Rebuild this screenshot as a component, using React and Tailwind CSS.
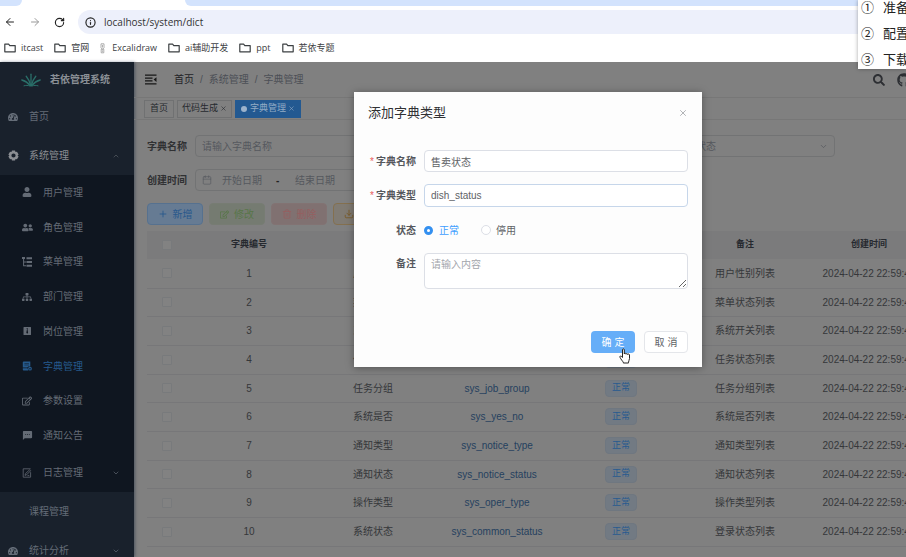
import React from "react";
import { ArrowLeft, ArrowRight, RotateCw, Info, X, ChevronDown, ChevronUp, Plus, Trash2, Download, Calendar } from "lucide-react";
import { FaTachometerAlt, FaUser, FaUserFriends, FaSitemap, FaRegEdit, FaSearch, FaGithub } from "react-icons/fa";
import { MdSms } from "react-icons/md";

const UI = "font-['Liberation_Sans','Noto_Sans_CJK_SC',sans-serif]";

function FolderIcon() {
  return (
    <svg viewBox="0 0 12 10" className="h-[10px] w-3" fill="none" stroke="#3c4043" strokeWidth="1.2">
      <path d="M.8 1.2h3.8l1.2 1.4h5.4v6.200H.8z" strokeLinejoin="round" />
    </svg>
  );
}

function ClipIcon() {
  return (
    <svg viewBox="0 0 5 11" className="mr-[2px] h-[11px] w-[5px]" fill="none" stroke="#9a9a9a" strokeWidth="0.8">
      <path d="M1 .8h3v4L2.5 6.4 1 4.8zM1.2 6.2h2.6v3.6H1.2zM2.5 2v2.5M2.5 7.4v1.4" />
    </svg>
  );
}

function LogoIcon() {
  return (
    <svg viewBox="0 0 20 14" className="h-[14px] w-5" fill="none" stroke="#2a6f69" strokeWidth="1.3" strokeLinecap="round">
      <path d="M10 12.500V1.200" />
      <path d="M9.600 12.500C8.800 8.500 7.200 5.500 5.200 3.200" />
      <path d="M10.400 12.500c.8-4 2.400-7 4.400-9.300" />
      <path d="M9.200 12.600C6.800 9.600 4 7.800.8 7" />
      <path d="M10.800 12.600c2.400-3 5.200-4.800 8.400-5.600" />
      <path d="M9 13c-2.200-.8-4-.8-6-.2M11 13c2.200-.8 4-.8 6-.2" strokeWidth="1" />
    </svg>
  );
}

function GearIcon() {
  return (
    <svg viewBox="0 0 12 12" className="size-[11px]" fill="currentColor">
      <path
        fillRule="evenodd"
        d="M4.300.6h3.400l.5 1.600 1.600-.4 1.800 3-1.200 1.200 1.200 1.200-1.800 3-1.600-.4-.5 1.600H4.300l-.5-1.600-1.600.4-1.800-3L1.600 6 .4 4.800l1.800-3 1.600.4zM6 3.700a2.300 2.300 0 1 0 0 4.600 2.300 2.300 0 0 0 0-4.600z"
      />
    </svg>
  );
}

function TreeTableIcon() {
  return (
    <svg viewBox="0 0 10 10" className="size-[10px]" fill="currentColor">
      <path d="M0 0h3v2H2.100v2.500H4v1H2.100v2.700H4v1H1.100V2H0zM4.500.3H10v2H4.500zM4.500 4H10v2H4.500zM4.500 7.700H10v2H4.500z" />
    </svg>
  );
}

function PostIcon() {
  return (
    <svg viewBox="0 0 10 10" className="size-[10px]" fill="currentColor">
      <path fillRule="evenodd" d="M2 1h6.500a.5.5 0 0 1 .5.5v7a.5.5 0 0 1-.5.5H2a.5.5 0 0 1-.5-.5v-7A.5.5 0 0 1 2 1zm2.400 1.200L5 3.200l-.7 3.600.9 1 .9-1-.6-3.600.5-1z" />
    </svg>
  );
}

function DictIcon() {
  return (
    <svg viewBox="0 0 10 10" className="size-[10px]" fill="currentColor">
      <path fillRule="evenodd" d="M1.500.4h6.800v5H6.200L5.400 6.600H.8V1.100zM2.400 2v.6h4.500V2zm0 1.700v.6h4.500v-.6z" />
      <path d="M.8 7.200h4.800l.6 2.200H1.600a.9.9 0 0 1-.8-.9z" />
      <path fillRule="evenodd" d="M8 5.800a1.900 1.900 0 1 1 0 3.800 1.900 1.900 0 0 1 0-3.800zm0 1.200a.7.7 0 1 0 0 1.400A.7.7 0 0 0 8 7z" />
    </svg>
  );
}

function LogIcon() {
  return (
    <svg viewBox="0 0 10 10" className="size-[10px]" fill="none" stroke="currentColor" strokeWidth="0.8">
      <path d="M8.600 4.200v5H1.200V.8h7.400M3 7.400l.5-1.800L7.600 1.800l1 1-4 4zM5.500 7.600h1.800" />
    </svg>
  );
}

function FoldIcon() {
  return (
    <svg viewBox="0 0 12 11" className="h-[11px] w-3" fill="#161616">
      <path d="M0 .5h11.500v1.300H0zM0 3.500h7.500v1.300H0zM0 6.300h7.500v1.300H0zM0 9.300h11.500v1.300H0zM11.500 3.200v4.700L8.600 5.500z" />
    </svg>
  );
}

function HandCursor() {
  return (
    <svg viewBox="0 0 12 16" className="absolute left-[265px] top-[256px] h-4 w-3" fill="#fff" stroke="#222" strokeWidth="1" strokeLinejoin="round">
      <path d="M3.500 9.500V1.800c0-1.300 1.800-1.300 1.800 0V6c0-1 1.700-1 1.700.2 0-.9 1.700-.9 1.700.3 0-.8 1.800-.7 1.800.5v3.500c0 1.500-1 2.300-1 3.800v.7H4.300v-.8C3.500 13 2 11.500 1 9.300.5 8 1.900 7.600 2.500 8.400z" />
    </svg>
  );
}

const bookmarks = [
  ["itcast", true],
  ["官网", true],
  ["Excalidraw", false],
  ["ai辅助开发", true],
  ["ppt", true],
  ["若依专题", true],
];

function BrowserChrome() {
  return (
    <header className="h-[62px] shrink-0 bg-white font-['Open_Sans','Noto_Sans_CJK_SC',sans-serif] text-[#3c4043]">
      <div className="flex h-[6px] bg-white">
        <div className="w-[22px] rounded-br-md bg-[#d3e3fd]" />
        <div className="w-[163px] bg-white" />
        <div className="flex-1 rounded-bl-md bg-[#d3e3fd]" />
      </div>
      <div className="flex h-8 items-center pl-1">
        <nav className="flex w-[74px] items-center gap-[13px]">
          <button aria-label="Back"><ArrowLeft className="size-3 text-[#222]" /></button>
          <button aria-label="Forward"><ArrowRight className="size-3 text-[#999]" /></button>
          <button aria-label="Reload"><RotateCw className="size-[11px] text-[#222]" strokeWidth={2.5} /></button>
        </nav>
        <label className="flex h-6 flex-1 items-center gap-2 rounded-l-full bg-[#edf0fb] pl-[7px]">
          <Info className="size-[11px] text-[#222]" strokeWidth={2.5} />
          <input aria-label="URL" defaultValue="localhost/system/dict" className="flex-1 bg-transparent text-[10px] text-[#333] outline-none" />
        </label>
      </div>
      <nav className="flex h-5 items-center gap-[11px] pl-1 text-[9px]">
        {bookmarks.map(([name, folder]) => (
          <a key={name} href="#" className="flex items-center gap-[5px] whitespace-nowrap">
            {folder ? <FolderIcon /> : <ClipIcon />}
            <span>{name}</span>
          </a>
        ))}
      </nav>
    </header>
  );
}

function TopItem({ icon, label, chevron, open }) {
  return (
    <a href="#" className={"flex h-[39px] items-center pl-2 pr-[14px] " + (open ? "text-[#8b8e93]" : "text-[#656d78]")}>
      <span className="flex w-[21px] items-center">{icon}</span>
      <span className="flex-1">{label}</span>
      {chevron}
    </a>
  );
}

const subItems = [
  ["用户管理", <FaUser className="size-[10px]" />],
  ["角色管理", <FaUserFriends className="size-[11px]" />],
  ["菜单管理", <TreeTableIcon />],
  ["部门管理", <FaSitemap className="size-[10px]" />],
  ["岗位管理", <PostIcon />],
  ["字典管理", <DictIcon />],
  ["参数设置", <FaRegEdit className="size-[10px]" />],
  ["通知公告", <MdSms className="size-[11px]" />],
];

function Sidebar() {
  return (
    <aside className="w-[134px] shrink-0 overflow-hidden bg-[#19212c] text-[10px] shadow-[1px_0_3px_rgba(0,20,50,0.4)]">
      <div className="flex h-[35px] items-center gap-[9px] pl-[21px]">
        <LogoIcon />
        <h1 className="font-bold text-[#8b9096]">若依管理系统</h1>
      </div>
      <TopItem icon={<FaTachometerAlt className="size-[10px]" />} label="首页" />
      <TopItem open icon={<GearIcon />} label="系统管理" chevron={<ChevronUp className="size-2 text-[#5b6068]" />} />
      <div className="bg-[#0f1620] text-[#646b75]">
        <div className="flex h-[278px] flex-col">
          {subItems.map(([label, icon]) => (
            <a key={label} href="#" className={"flex flex-1 items-center pl-[22px] " + (label === "字典管理" ? "text-[#265a8c]" : "")}>
              <span className="flex w-[21px]">{icon}</span>
              <span>{label}</span>
            </a>
          ))}
        </div>
        <a href="#" className="flex h-[39px] items-center pl-[22px] pr-[14px]">
          <span className="flex w-[21px]"><LogIcon /></span>
          <span className="flex-1">日志管理</span>
          <ChevronDown className="size-2" />
        </a>
      </div>
      <TopItem label="课程管理" />
      <TopItem icon={<FaTachometerAlt className="size-[10px]" />} label="统计分析" chevron={<ChevronDown className="size-2" />} />
    </aside>
  );
}

function Navbar() {
  return (
    <div className="flex h-[35px] items-center pl-[11px] text-[10px]">
      <button aria-label="折叠菜单"><FoldIcon /></button>
      <nav className="ml-[17px] flex flex-1 items-center gap-[6px] text-[#4c4f56]">
        <a href="#" className="text-[#1f2226]">首页</a>
        <span>/</span>
        <span>系统管理</span>
        <span>/</span>
        <span>字典管理</span>
      </nav>
      <div className="-mr-[5px] flex items-center gap-3 text-[#2d2f33]">
        <button aria-label="搜索"><FaSearch className="size-3" /></button>
        <a href="#" aria-label="Github"><FaGithub className="size-[14px]" /></a>
      </div>
    </div>
  );
}

function TagsView() {
  return (
    <nav className="flex h-[23px] items-center gap-[3px] border-y border-y-[#777777] pl-[10px] text-[9px] text-[#26292e]">
      <a href="#" className="flex h-[18px] items-center border border-[#707172] px-[5px]">首页</a>
      <a href="#" className="flex h-[18px] items-center gap-[2px] border border-[#707172] px-[4px]">代码生成<X className="size-[7px]" /></a>
      <a href="#" className="flex h-[18px] items-center gap-[2px] bg-[#235991] px-[6px] text-[#92abc5]">
        <span className="mr-px size-[6px] rounded-full bg-[#9cb3cc]" />字典管理<X className="size-[7px]" />
      </a>
    </nav>
  );
}

const field = "h-[22px] w-[166px] rounded-sm border border-[#727374] bg-transparent";

function SearchForm() {
  return (
    <form className="flex flex-col gap-3 whitespace-nowrap text-[10px] text-[#55585e]">
      <div className="flex gap-[23px]">
        <div className="flex items-center">
          <label htmlFor="q-name" className="w-12 font-bold text-[#303133]">字典名称</label>
          <input id="q-name" placeholder="请输入字典名称" className={field + " px-[6px] placeholder:text-[#55585e]"} />
        </div>
        <div className="flex items-center">
          <label htmlFor="q-type" className="w-12 font-bold text-[#303133]">字典类型</label>
          <input id="q-type" placeholder="请输入字典类型" className={field + " px-[6px] placeholder:text-[#55585e]"} />
        </div>
        <div className="flex items-center">
          <label htmlFor="q-status" className="w-12 font-bold text-[#303133]">状态</label>
          <div className="grid items-center">
            <select id="q-status" className={field + " col-start-1 row-start-1 appearance-none px-[6px]"}>
              <option>字典状态</option>
            </select>
            <ChevronDown className="pointer-events-none col-start-1 row-start-1 mr-[7px] size-[9px] justify-self-end" />
          </div>
        </div>
      </div>
      <div className="flex items-center">
        <label htmlFor="q-start" className="w-12 font-bold text-[#303133]">创建时间</label>
        <div className={field + " flex items-center pl-[6px]"}>
          <Calendar className="size-[10px]" strokeWidth={1.5} />
          <input id="q-start" placeholder="开始日期" className="ml-[10px] w-[50px] bg-transparent placeholder:text-[#55585e]" />
          <span className="w-[23px] pl-1 font-bold text-[#222]">-</span>
          <input aria-label="结束日期" placeholder="结束日期" className="w-[50px] bg-transparent placeholder:text-[#55585e]" />
        </div>
      </div>
    </form>
  );
}

const toolBtn = "flex h-[22px] w-14 items-center justify-center gap-[5px] rounded-sm border text-[10px] ";

function Toolbar() {
  return (
    <div className="flex gap-[6px]">
      <button className={toolBtn + "border-[#56718f] bg-[#667b93] text-[#28588c]"}><Plus className="size-[10px]" />新增</button>
      <button className={toolBtn + "border-[#777c73] bg-[#757b71] text-[#587649]"}><FaRegEdit className="size-[9px]" />修改</button>
      <button className={toolBtn + "border-[#827373] bg-[#807171] text-[#955f60]"}><Trash2 className="size-[10px]" />删除</button>
      <button className={toolBtn + "border-[#84704f] bg-[#807b73] text-[#7a5a25]"}><Download className="size-[10px]" />导出</button>
    </div>
  );
}

const rows = [
  ["用户性别", "sys_user_sex", "用户性别列表"],
  ["菜单状态", "sys_show_hide", "菜单状态列表"],
  ["系统开关", "sys_normal_disable", "系统开关列表"],
  ["任务状态", "sys_job_status", "任务状态列表"],
  ["任务分组", "sys_job_group", "任务分组列表"],
  ["系统是否", "sys_yes_no", "系统是否列表"],
  ["通知类型", "sys_notice_type", "通知类型列表"],
  ["通知状态", "sys_notice_status", "通知状态列表"],
  ["操作类型", "sys_oper_type", "操作类型列表"],
  ["系统状态", "sys_common_status", "登录状态列表"],
];

const tick = "mx-auto block size-[10px] appearance-none rounded-[1px] border border-[#787a7c] bg-[#828282]";

function DictTable() {
  return (
    <div className="overflow-hidden">
      <table className="w-[784px] table-fixed text-center text-[10px] text-[#35373a]">
        <thead className="bg-[#7b7b7c] text-[9px] text-[#26292f]">
          <tr className="h-7">
            <th className="w-[40px]"><input type="checkbox" aria-label="全选" className={tick} /></th>
            <th>字典编号</th>
            <th>字典名称</th>
            <th>字典类型</th>
            <th>状态</th>
            <th>备注</th>
            <th>创建时间</th>
          </tr>
        </thead>
        <tbody>
          {rows.map(([name, type, remark], i) => (
            <tr key={type} className={"border-b border-[#777779] " + (i % 3 === 1 ? "h-7" : "h-[29px]")}>
              <td><input type="checkbox" aria-label={name} className={tick} /></td>
              <td>{i + 1}</td>
              <td>{name}</td>
              <td><a href="#" className="text-[#25405f]">{type}</a></td>
              <td><span className="inline-flex h-[17px] items-center rounded-sm border border-[#6f7780] bg-[#727a83] px-[6px] align-middle text-[9px] text-[#285b90]">正常</span></td>
              <td>{remark}</td>
              <td className="whitespace-nowrap">2024-04-22 22:59:41</td>
            </tr>
          ))}
        </tbody>
      </table>
    </div>
  );
}

const dialogField = "flex-1 rounded-sm border bg-white px-[6px] text-[#606266] ";
const dialogLabel = "w-[56px] pr-2 text-right font-bold text-[#55575c] whitespace-nowrap";

function RequiredLabel({ htmlFor, children }) {
  return (
    <label htmlFor={htmlFor} className={dialogLabel}>
      <span className="mr-[2px] font-normal text-[#e85c5c]">*</span>{children}
    </label>
  );
}

function Dialog() {
  return (
    <section role="dialog" aria-label="添加字典类型" className="absolute left-[354px] top-[92px] w-[348px] bg-[#fdfdfd] px-[14px] pb-[14px] text-[10px] shadow-[0_1px_8px_rgba(0,0,0,0.35)]">
      <div className="flex h-[42px] items-center justify-between">
        <h2 className="text-[13px] text-[#303133]">添加字典类型</h2>
        <button aria-label="关闭"><X className="size-[10px] text-[#85888d]" strokeWidth={1.5} /></button>
      </div>
      <form className="flex flex-col gap-3 pt-4">
        <div className="flex h-[22px] items-center">
          <RequiredLabel htmlFor="d-name">字典名称</RequiredLabel>
          <input id="d-name" defaultValue="售卖状态" className={dialogField + "h-[22px] border-[#dcdfe6]"} />
        </div>
        <div className="flex h-[23px] items-center">
          <RequiredLabel htmlFor="d-type">字典类型</RequiredLabel>
          <input id="d-type" defaultValue="dish_status" className={dialogField + "h-[23px] border-[#c6d6ea]"} />
        </div>
        <div role="radiogroup" aria-label="状态" className="flex h-[22px] items-center">
          <span className={dialogLabel}>状态</span>
          <label className="flex w-[57px] items-center gap-[6px] text-[#409eff]">
            <input type="radio" name="status" defaultChecked className="size-[9px] appearance-none rounded-full border-[3px] border-[#3490f0] bg-white" />正常
          </label>
          <label className="flex items-center gap-[5px] text-[#606266]">
            <input type="radio" name="status" className="size-[10px] appearance-none rounded-full border border-[#dcdfe6] bg-white" />停用
          </label>
        </div>
        <div className="flex items-start">
          <label htmlFor="d-remark" className={dialogLabel + " leading-[22px]"}>备注</label>
          <textarea id="d-remark" placeholder="请输入内容" className={dialogField + "h-9 resize-y border-[#dcdfe6] py-[3px] leading-[15px] placeholder:text-[#a3a6ac]"} />
        </div>
      </form>
      <div className="mt-[42px] flex justify-end gap-[9px]">
        <button className="h-[22px] w-11 rounded-sm bg-[#66aef8] text-white">确 定</button>
        <button className="h-[22px] w-11 rounded-sm border border-[#e4e6ea] bg-white text-[#606266]">取 消</button>
      </div>
      <HandCursor />
    </section>
  );
}

function StepsNote() {
  return (
    <aside className="absolute right-0 top-0 h-[69px] w-12 overflow-hidden whitespace-nowrap bg-white pl-[3px] text-[13px] leading-[26px] text-[#222] shadow-[0_0_4px_rgba(0,0,0,0.35)]">
      <ol className="-mt-[5px]">
        <li className="flex gap-[9px]"><span>①</span><span>准备</span></li>
        <li className="flex gap-[9px]"><span>②</span><span>配置</span></li>
        <li className="flex gap-[9px]"><span>③</span><span>下载</span></li>
      </ol>
    </aside>
  );
}

export default function App() {
  return (
    <div className={"relative flex h-screen flex-col overflow-hidden " + UI}>
      <BrowserChrome />
      <div className="flex min-h-0 flex-1 bg-[#808080]">
        <Sidebar />
        <main className="min-w-0 flex-1 overflow-hidden">
          <Navbar />
          <TagsView />
          <div className="flex flex-col pl-[13px] pt-[15px]">
            <SearchForm />
            <div className="mt-3"><Toolbar /></div>
            <div className="mt-[6px]"><DictTable /></div>
          </div>
        </main>
      </div>
      <Dialog />
      <StepsNote />
    </div>
  );
}
